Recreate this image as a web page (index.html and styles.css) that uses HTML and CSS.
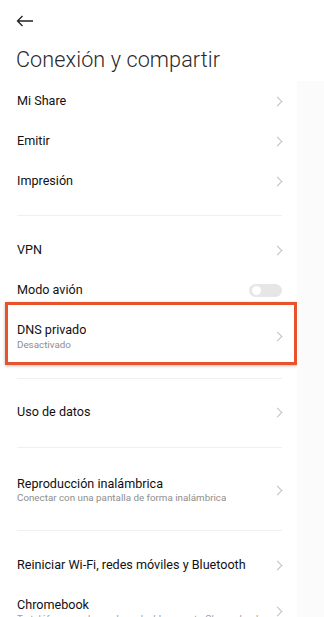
FILE: index.html
```html
<!DOCTYPE html>
<html lang="es">
<head>
<meta charset="utf-8">
<title>Conexión y compartir</title>
<link rel="stylesheet" href="styles.css">
</head>
<body>
<div class="page">
  <header class="header">
    <svg class="back" width="18" height="12" viewBox="0 0 18 12"><path d="M17 6H1.5M6.5 1L1.5 6l5 5" fill="none" stroke="#222" stroke-width="1.3"/></svg>
  </header>
  <h1 class="title">Conexión y compartir</h1>
  <div class="main">
    <div class="list">
      <div class="row"><span class="label">Mi Share</span><span class="chev"></span></div>
      <div class="row"><span class="label">Emitir</span><span class="chev"></span></div>
      <div class="row"><span class="label">Impresión</span><span class="chev"></span></div>
      <div class="divider d1"></div>
      <div class="row"><span class="label">VPN</span><span class="chev"></span></div>
      <div class="row"><span class="label">Modo avión</span><span class="toggle"><span class="knob"></span></span></div>
      <div class="highlight">
        <div class="row two">
          <div class="texts"><span class="label">DNS privado</span><span class="sub">Desactivado</span></div>
          <span class="chev"></span>
        </div>
      </div>
      <div class="divider d2"></div>
      <div class="row"><span class="label">Uso de datos</span><span class="chev"></span></div>
      <div class="divider d3"></div>
      <div class="row two repro">
        <div class="texts"><span class="label">Reproducción inalámbrica</span><span class="sub">Conectar con una pantalla de forma inalámbrica</span></div>
        <span class="chev"></span>
      </div>
      <div class="divider d4"></div>
      <div class="row"><span class="label">Reiniciar Wi-Fi, redes móviles y Bluetooth</span><span class="chev"></span></div>
      <div class="row two chrome">
        <div class="texts"><span class="label">Chromebook</span><span class="sub">Tu teléfono puede ayudar a desbloquear tu Chromebook</span></div>
        <span class="chev"></span>
      </div>
    </div>
    <div class="side"></div>
  </div>
</div>
</body>
</html>
```
FILE: styles.css
```css
* { box-sizing: border-box; margin: 0; padding: 0; }
html, body { background: #fff; }
body { font-family: Roboto, "Noto Sans", Arial, sans-serif; color: #1c1c1c; overflow: hidden; }
.page { width: 324px; height: 617px; overflow: hidden; }
.header { height: 42px; display: flex; align-items: center; padding-left: 16px; }
.back { display: block; }
.title { font-size: 21.6px; font-weight: 300; color: #2a2a2a; line-height: 36px; padding-left: 16px; margin-bottom: 3px; letter-spacing: 0.1px; }
.main { display: flex; }
.list { width: 297px; flex: none; }
.side { flex: 1; background: #fbfbfb; }
.row { height: 40px; display: flex; align-items: center; justify-content: space-between; padding: 0 13px 0 17px; }
.label { font-size: 12.6px; line-height: 16px; color: #111; white-space: nowrap; }
.sub { font-size: 9.8px; line-height: 12px; color: #8e8e8e; white-space: nowrap; display: block; }
.texts { display: flex; flex-direction: column; overflow: hidden; }
.chev { width: 7px; height: 7px; border-right: 1px solid #c0c0c0; border-top: 1px solid #c0c0c0; transform: rotate(45deg); margin-right: 3px; flex: none; }
.divider { height: 1px; background: #f0f0f0; margin: 0 15px 0 17px; }
.d1 { margin-top: 14px; margin-bottom: 14px; }
.toggle { width: 33px; height: 13px; border-radius: 7px; background: #e6e6e6; position: relative; display: block; margin-right: 2px; }
.knob { position: absolute; left: 3px; top: 2px; width: 9px; height: 9px; border-radius: 50%; background: #fff; }
.highlight { margin: -8px 0 0 5px; border: 3px solid #e9532c; box-shadow: 0 1px 3px rgba(0,0,0,0.25); }
.highlight .row { height: 57px; padding: 5px 10px 0 9px; }
.highlight .sub { margin-top: 1px; }
.d2 { margin-top: 13px; margin-bottom: 13px; }
.d3 { margin-top: 15px; }
.repro { height: 82px; padding-top: 2px; }
.d4 { margin-top: 0; margin-bottom: 14px; }
.chrome { height: 40px; align-items: flex-start; padding-top: 12px; }
.chrome .sub { color: #a0a0a0; }
.chrome .chev { margin-top: 11px; }
```
